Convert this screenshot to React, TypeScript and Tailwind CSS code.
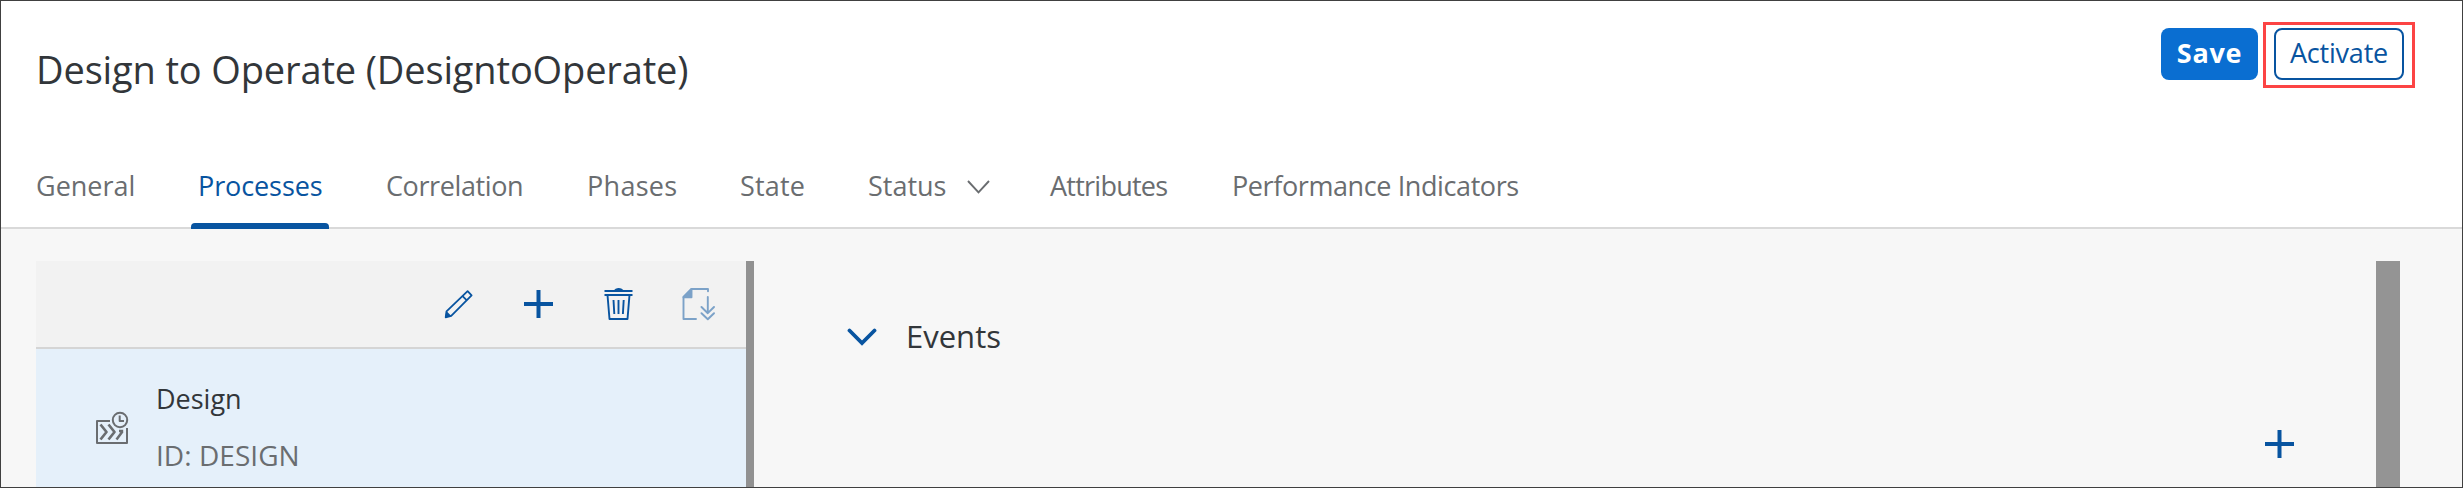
import React from 'react';

const tabs = [
  { label: 'General', className: 'w-[162px]' },
  { label: 'Processes', className: 'w-[188px] text-[#0854a0] tracking-[-0.1px]', active: true },
  { label: 'Correlation', className: 'w-[201px] tracking-[-0.4px]' },
  { label: 'Phases', className: 'w-[153px] tracking-[0.3px]' },
  { label: 'State', className: 'w-[128px] tracking-[0.2px]' },
  { label: 'Status', className: 'w-[182px]', menu: true },
  { label: 'Attributes', className: 'w-[182px] tracking-[-0.75px]' },
  { label: 'Performance Indicators', className: 'w-[300px] tracking-[-0.4px]' },
];

function PencilIcon() {
  return (
    <svg className="h-8 w-8" viewBox="0 0 32 32" fill="none" stroke="currentColor" strokeWidth="1.8" strokeLinejoin="round">
      <path d="M4.5 23.3 25.6 3.2l4 4.2L9.2 27.8l-5.5 1.5z" />
      <path d="M20.6 8.2l4.2 4.2" />
      <path d="M4.4 23l5 5-6.2 1.6z" fill="currentColor" stroke="none" />
    </svg>
  );
}

function PlusIcon() {
  return (
    <svg className="h-8 w-8" viewBox="0 0 32 32" stroke="currentColor" strokeWidth="4">
      <path d="M2 16h29M16.5 2v28" />
    </svg>
  );
}

function TrashIcon() {
  return (
    <svg className="h-8 w-8" viewBox="0 0 32 32" fill="none" stroke="currentColor" strokeWidth="2">
      <path d="M2.5 3h28M2.5 7h28" />
      <path d="M11.5 3c1-2 3-3 5.2-3s4.2 1 5.2 3z" fill="currentColor" stroke="none" />
      <path d="M5.5 7l2 24h18l2-24" strokeWidth="1.9" strokeLinejoin="round" />
      <path d="M11.5 12l.8 14M16.5 12v14M21.7 12l-.8 14" strokeWidth="1.9" />
    </svg>
  );
}

function DownloadDocIcon() {
  return (
    <svg className="h-8 w-8 overflow-visible" viewBox="0 0 32 32" fill="none" stroke="currentColor" strokeWidth="1.9" strokeLinecap="round" strokeLinejoin="round">
      <path d="M26 3.2V1H9.5L1.5 9v22H14" />
      <path d="M9.5 1v8.2h-8z" fill="currentColor" />
      <path d="M25.8 9v15.500M19.500 19l6.300 6.200L32 19M19.500 25.200l6.300 6L32 25.200" />
    </svg>
  );
}

function ProcessIcon() {
  return (
    <svg className="h-8 w-8 overflow-visible" viewBox="0 0 32 32" fill="none" stroke="currentColor" strokeWidth="2" strokeLinejoin="round">
      <path d="M14 9H1v22h30V16" />
      <circle cx="24" cy="8" r="7.2" />
      <path d="M23.7 3.5V9H28" />
      <path d="M4.5 12.5l6 7.5-6 7.5M12.5 12.5l6 7.5-6 7.5" strokeWidth="2.7" />
      <path d="M20.5 27.5l6-8M23 19h4.2" strokeWidth="2.5" />
    </svg>
  );
}

export default function App() {
  return (
    <div className="flex h-[488px] w-full flex-col overflow-hidden border border-[#404040] bg-[#f7f7f7] font-['Open_Sans',sans-serif] text-[27px] text-[#32363a]">
      <header className="flex h-[228px] shrink-0 flex-col border-b-2 border-[#d9d9d9] bg-white">
        <div className="flex h-[141px] items-start justify-between pl-[35px] pr-[47px]">
          <h1 className="mt-[43px] whitespace-nowrap text-[38px] leading-[50px] tracking-[-0.14px]">Design to Operate (DesigntoOperate)</h1>
          <div className="mt-[21px] flex items-start gap-[5px]">
            <button className="mt-[6px] h-[52px] w-[97px] rounded-lg bg-[#0a6ed1] pb-[3px] text-center font-bold leading-[49px] tracking-[0.7px] text-white">Save</button>
            <div className="flex h-[66px] w-[152px] items-start justify-center border-[3px] border-[#fc4444] pt-[3px]">
              <button className="h-[52px] w-[130px] rounded-lg border-2 border-[#0854a0] pb-[3px] leading-[45px] tracking-[-0.2px] text-[#0854a0]">Activate</button>
            </div>
          </div>
        </div>
        <nav className="-mb-0.5 flex h-[87px] pl-[35px] text-[#6a6d70]">
          {tabs.map((tab) => (
            <div key={tab.label} className={`flex shrink-0 flex-col justify-between whitespace-nowrap ${tab.className}`}>
              <div className="mt-[24px] flex items-center leading-[40px]">
                {tab.label}
                {tab.menu && (
                  <svg className="ml-[21px] mt-[2px] h-[14px] w-[24px]" viewBox="0 0 24 14" fill="none" stroke="currentColor" strokeWidth="1.9">
                    <path d="M1 1 11.5 12.3 22 1" />
                  </svg>
                )}
              </div>
              {tab.active && <div className="-ml-[7px] h-[6px] w-[138px] rounded-t-[4px] bg-[#0854a0]" />}
            </div>
          ))}
        </nav>
      </header>

      <main className="flex min-h-0 flex-1 pl-[35px] pt-8">
        <aside className="w-[710px] shrink-0 bg-[#e5f0fa]">
          <div className="flex h-[88px] items-center justify-end gap-12 border-b-2 border-[#d5d5d5] bg-[#f2f2f2] pr-[32px] text-[#0854a0]">
            <PencilIcon />
            <PlusIcon />
            <TrashIcon />
            <div className="opacity-50"><DownloadDocIcon /></div>
          </div>
          <div className="flex pl-[60px]">
            <div className="mt-[63px] text-[#6a6d70]"><ProcessIcon /></div>
            <div className="ml-[28px] mt-[30px] whitespace-nowrap">
              <p className="leading-[40px]">Design</p>
              <p className="mt-4 text-[28px] leading-[40px] tracking-[0.05px] text-[#6a6d70]">ID: DESIGN</p>
            </div>
          </div>
        </aside>
        <div className="w-2 shrink-0 bg-[#919191]" />
        <section className="flex flex-1 flex-col">
          <div className="ml-[93px] mt-[55px] flex h-10 items-center">
            <svg className="mt-[2px] h-[18px] w-[30px]" viewBox="0 0 30 18" fill="none" stroke="#0854a0" strokeWidth="3.8" strokeLinecap="round">
              <path d="M2.5 2.5 15 15 27.5 2.5" />
            </svg>
            <h2 className="ml-[29px] text-[31px] leading-[40px]">Events</h2>
          </div>
          <div className="mr-[81px] mt-[72px] flex justify-end text-[#0854a0]">
            <PlusIcon />
          </div>
        </section>
        <div className="mr-[62px] w-6 shrink-0 bg-[#949494]" />
      </main>
    </div>
  );
}
